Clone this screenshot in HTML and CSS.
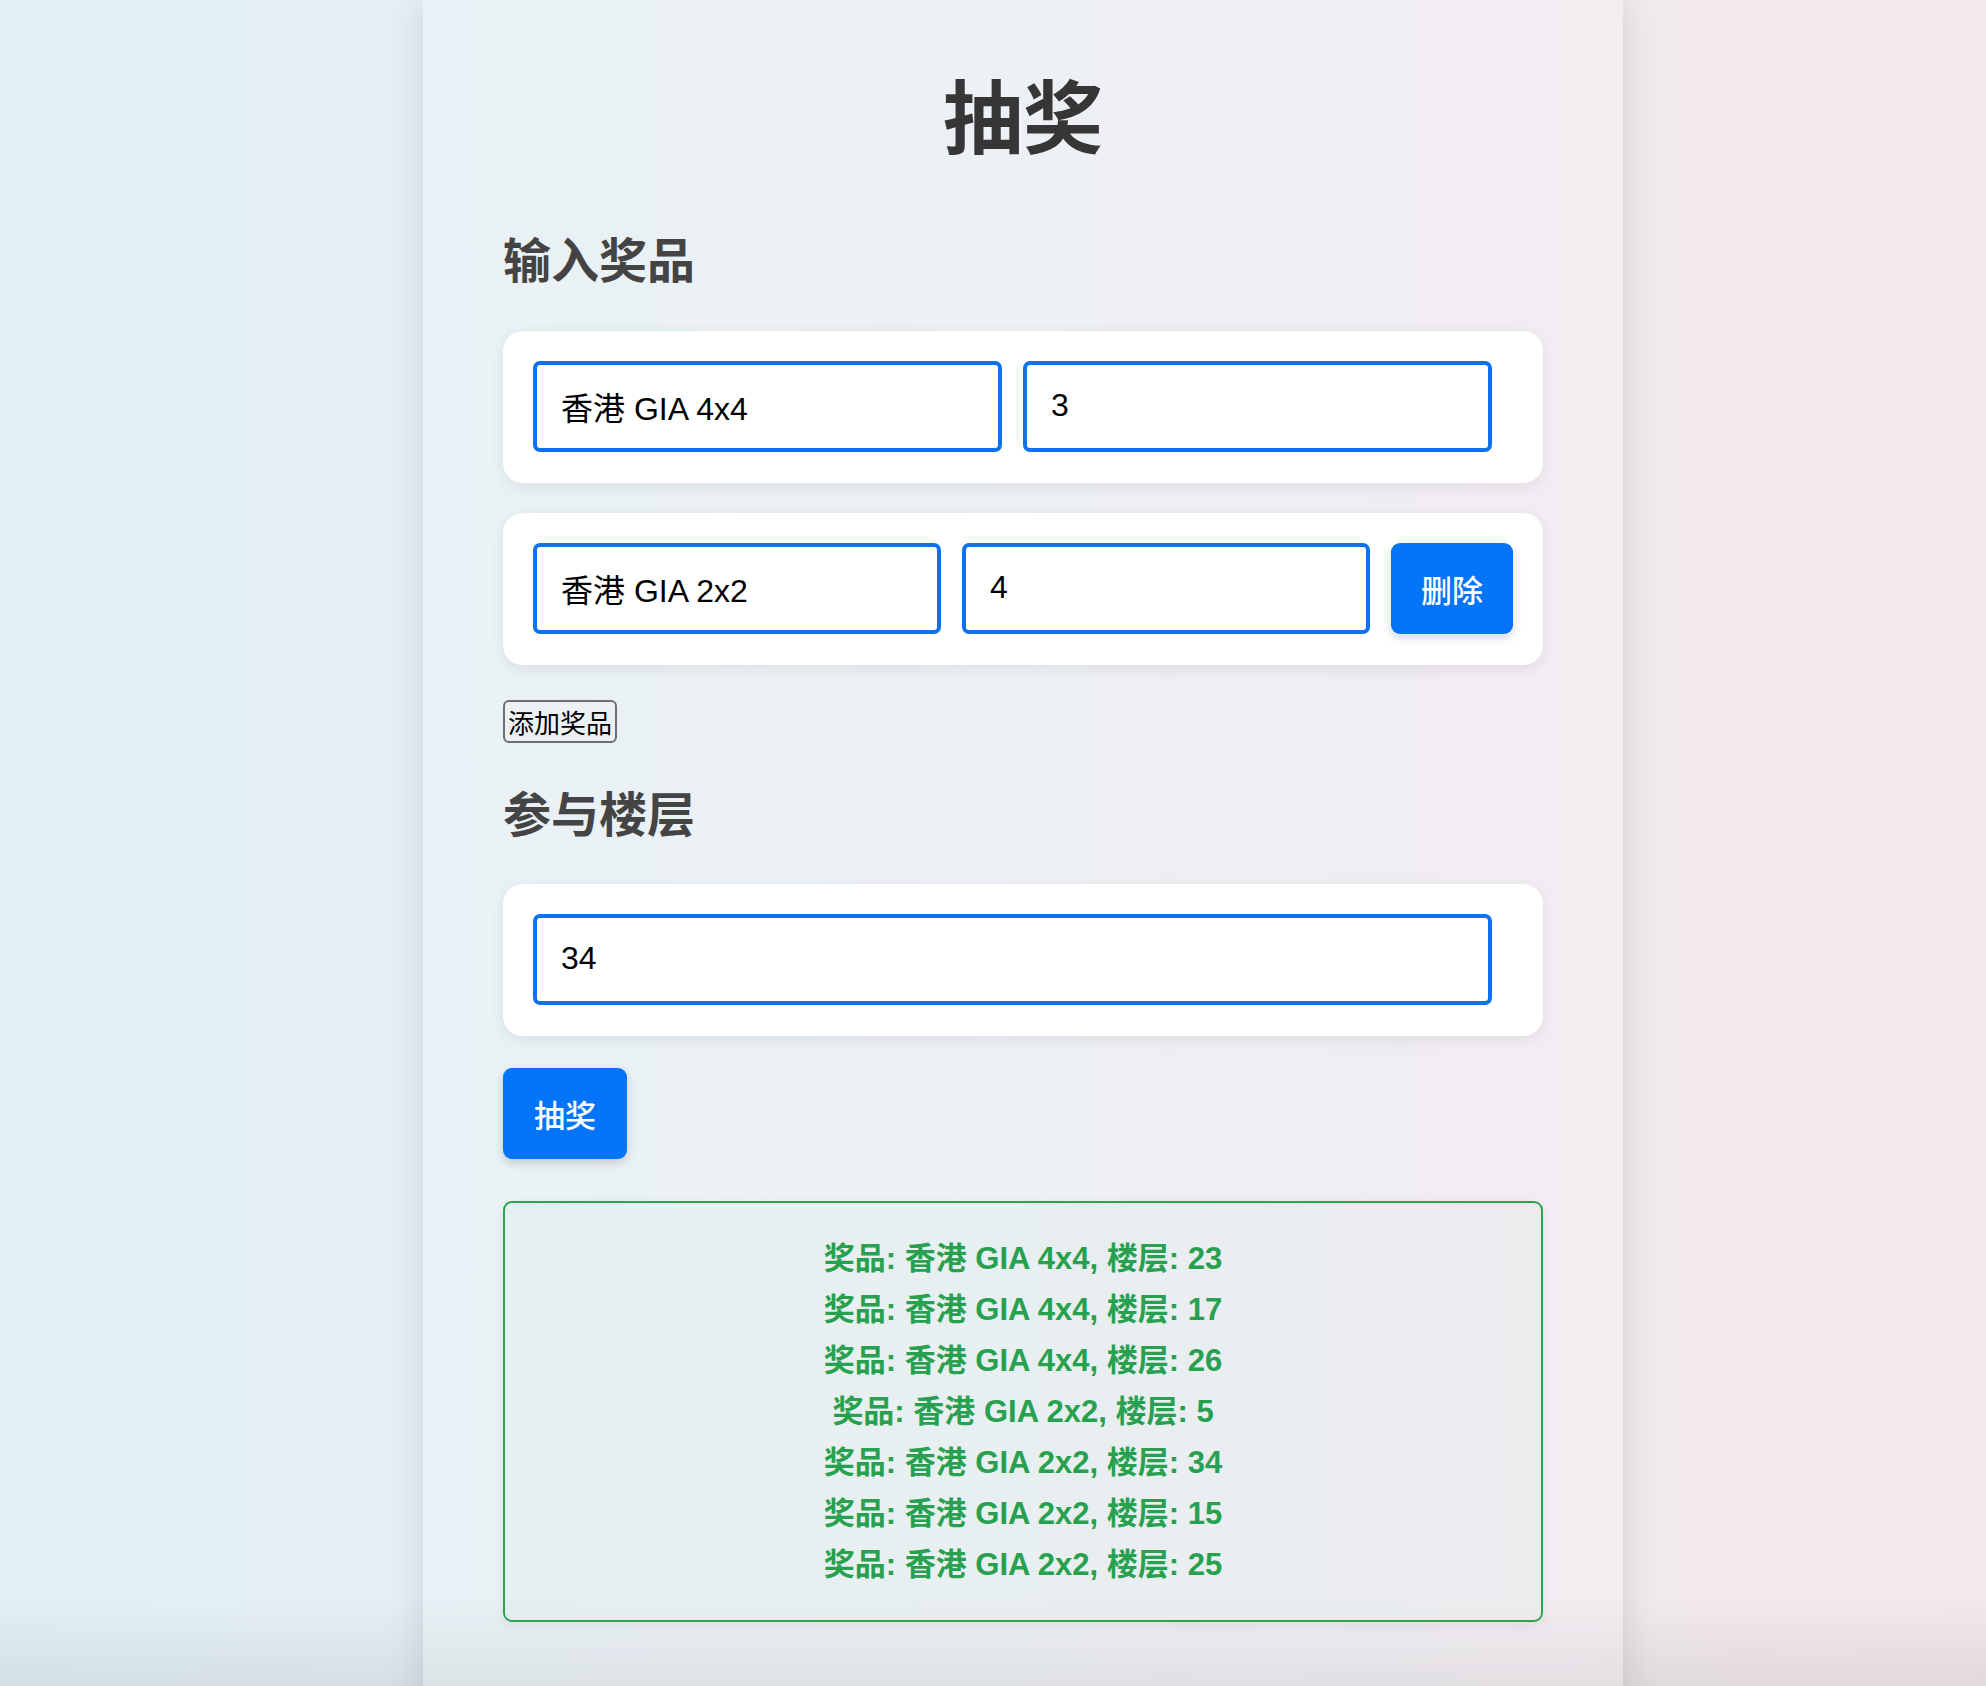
FILE: index.html
```html
<!DOCTYPE html>
<html lang="zh-CN">
<head>
<meta charset="utf-8">
<title>抽奖</title>
<link rel="stylesheet" href="styles.css">
</head>
<body>
<div class="container">
  <h1 class="title">抽奖</h1>
  <h2 class="section-title">输入奖品</h2>
  <div class="card prize-row">
    <input class="field" type="text" value="香港 GIA 4x4">
    <input class="field" type="text" value="3">
  </div>
  <div class="card prize-row">
    <input class="field" type="text" value="香港 GIA 2x2">
    <input class="field" type="text" value="4">
    <button class="btn-primary">删除</button>
  </div>
  <button class="btn-default">添加奖品</button>
  <h2 class="section-title floors-title">参与楼层</h2>
  <div class="card prize-row">
    <input class="field" type="text" value="34">
  </div>
  <button class="btn-primary draw-btn">抽奖</button>
  <div class="result">
    <p>奖品: 香港 GIA 4x4, 楼层: 23</p>
    <p>奖品: 香港 GIA 4x4, 楼层: 17</p>
    <p>奖品: 香港 GIA 4x4, 楼层: 26</p>
    <p>奖品: 香港 GIA 2x2, 楼层: 5</p>
    <p>奖品: 香港 GIA 2x2, 楼层: 34</p>
    <p>奖品: 香港 GIA 2x2, 楼层: 15</p>
    <p>奖品: 香港 GIA 2x2, 楼层: 25</p>
  </div>
</div>
</body>
</html>
```
FILE: styles.css
```css
html, body {
  margin: 0;
  padding: 0;
}
body {
  min-height: 100vh;
  overflow: hidden;
  font-family: "Liberation Sans", "Noto Sans CJK SC", sans-serif;
  background:
    linear-gradient(to bottom, rgba(0,0,0,0) calc(100% - 90px), rgba(0,0,0,0.07) 100%),
    linear-gradient(to right, #e2f1f6 0%, #eaeef3 50%, #f5e8ed 100%);
  background-attachment: fixed;
}
.container {
  box-sizing: border-box;
  width: 1200px;
  min-height: 1760px;
  margin-left: 423px;
  padding: 64px 80px 60px;
  background: rgba(255,255,255,0.14);
  box-shadow: 0 0 36px rgba(0,0,0,0.12);
}
.title {
  margin: 0;
  font-family: "Noto Sans CJK SC", sans-serif;
  font-size: 80px;
  line-height: 96px;
  font-weight: 700;
  text-align: center;
  color: #363636;
}
.section-title {
  margin: 68px 0 45px;
  font-family: "Noto Sans CJK SC", sans-serif;
  font-size: 48px;
  line-height: 58px;
  font-weight: 700;
  color: #444;
}
.floors-title {
  margin: 39px 0 44px;
}
.card {
  display: flex;
  align-items: stretch;
  background: #fff;
  border-radius: 20px;
  padding: 30px 30px 31px;
  margin-bottom: 30px;
  box-shadow: 0 4px 16px rgba(0,0,0,0.07);
}
.field {
  flex: 1;
  min-width: 0;
  box-sizing: border-box;
  height: 91px;
  margin: 0 21px 0 0;
  padding: 0 24px 2px;
  border: 4px solid #0d72ec;
  border-radius: 7px;
  background: #fff;
  font-family: "Liberation Sans", "Noto Sans CJK SC", sans-serif;
  font-size: 32px;
  line-height: 38px;
  color: #000;
  outline: none;
}
.btn-primary {
  box-sizing: border-box;
  height: 91px;
  padding: 0 30px;
  border: none;
  border-radius: 9px;
  background: #0474f8;
  color: #fff;
  font-family: "Noto Sans CJK SC", sans-serif;
  font-size: 31px;
  font-weight: 500;
  box-shadow: 0 4px 10px rgba(0,0,0,0.16);
}
.btn-default {
  display: block;
  box-sizing: border-box;
  height: 43px;
  margin: 35px 0 0;
  padding: 0 3px;
  border: 2px solid #6e6e6e;
  border-radius: 6px;
  background: rgba(240,240,240,0.5);
  font-family: "Noto Sans CJK SC", sans-serif;
  font-size: 26px;
  line-height: 38px;
  color: #000;
}
.draw-btn {
  display: block;
  width: 124px;
  height: 91px;
  padding: 0;
  margin: 32px 0 0;
}
.result {
  margin-top: 42px;
  padding: 30px;
  border: 2px solid #2ea44f;
  border-radius: 9px;
  background: rgba(220,235,230,0.25);
  box-shadow: 0 4px 14px rgba(0,0,0,0.06);
  text-align: center;
}
.result p {
  margin: 0;
  font-family: "Liberation Sans", "Noto Sans CJK SC", sans-serif;
  font-size: 31px;
  line-height: 51px;
  font-weight: 700;
  color: #27a14f;
}
```
